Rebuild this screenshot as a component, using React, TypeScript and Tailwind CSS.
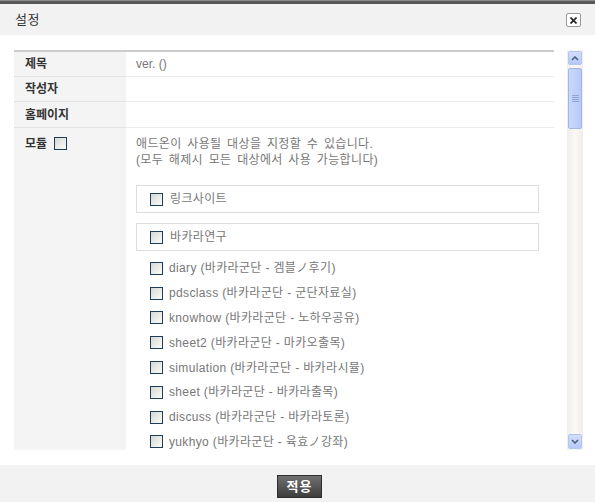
import React from 'react';

const FONT = "font-['Liberation_Sans','Noto_Sans_CJK_KR',sans-serif]";

const modules = [
  { id: 'diary', name: '바카라군단 - 겜블ノ후기' },
  { id: 'pdsclass', name: '바카라군단 - 군단자료실' },
  { id: 'knowhow', name: '바카라군단 - 노하우공유' },
  { id: 'sheet2', name: '바카라군단 - 마카오출목' },
  { id: 'simulation', name: '바카라군단 - 바카라시뮬' },
  { id: 'sheet', name: '바카라군단 - 바카라출목' },
  { id: 'discuss', name: '바카라군단 - 바카라토론' },
  { id: 'yukhyo', name: '바카라군단 - 육효ノ강좌' },
];

const Check = () => (
  <span className="inline-block w-[13px] h-[13px] shrink-0 border border-[#1c3d5c] bg-linear-to-br from-[#d8d8d2] to-[#fbfbf9]" />
);

const InfoRow = ({ label, value, h }: { label: string; value?: string; h: string }) => (
  <div className={`flex ${h}`}>
    <div className="w-[112px] shrink-0 bg-[#f4f4f4] border-b border-[#e2e2e2] pl-[11px] flex items-center text-[12px] font-bold text-[#333]">
      {label}
    </div>
    <div className="flex-1 border-b border-[#ececec] pl-[10px] flex items-center text-[12px] text-[#777]">
      {value}
    </div>
  </div>
);

const Scrollbar = () => (
  <div className="w-[16px] h-[400px] shrink-0 flex flex-col bg-linear-to-r from-[#efeee8] via-[#faf9f6] to-[#efeee8]">
    <div className="mx-[1px] mt-[1px] h-[14px] rounded-[2px] border border-[#b4c6ef] bg-linear-to-b from-[#d3defd] to-[#b6c9f7] flex items-center justify-center">
      <svg width="8" height="5" viewBox="0 0 8 5">
        <path d="M1 4 L4 1 L7 4" stroke="#4d6185" strokeWidth="1.6" fill="none" />
      </svg>
    </div>
    <div className="mx-[1px] mt-[3px] h-[61px] rounded-[2px] border border-[#a3b6e2] bg-linear-to-r from-[#c9d7fd] to-[#b7caf8] flex flex-col items-center justify-center gap-[1px]">
      <span className="w-[7px] h-[1px] bg-[#8ea4d8]" />
      <span className="w-[7px] h-[1px] bg-[#8ea4d8]" />
      <span className="w-[7px] h-[1px] bg-[#8ea4d8]" />
      <span className="w-[7px] h-[1px] bg-[#8ea4d8]" />
    </div>
    <div className="flex-1" />
    <div className="mx-[1px] mb-[1px] h-[15px] rounded-[2px] border border-[#b4c6ef] bg-linear-to-b from-[#d3defd] to-[#b6c9f7] flex items-center justify-center">
      <svg width="8" height="5" viewBox="0 0 8 5">
        <path d="M1 1 L4 4 L7 1" stroke="#4d6185" strokeWidth="1.6" fill="none" />
      </svg>
    </div>
  </div>
);

export default function App() {
  return (
    <div className={`w-[595px] h-[502px] flex flex-col bg-white overflow-hidden ${FONT}`}>
      <div className="h-[4px] bg-[#585858] border-t border-[#8c8c8c]" />
      <header className="h-[31px] bg-[#f2f2f2] flex items-center justify-between pl-[15px] pr-[14px]">
        <h1 className="text-[13px] text-[#333] tracking-[0.5px]">설정</h1>
        <button className="w-[15px] h-[14px] mt-[1px] rounded-[2px] border border-[#9a9a9a] bg-white flex items-center justify-center">
          <svg width="7" height="7" viewBox="0 0 7 7">
            <path d="M0.5 0.5 L6.5 6.5 M6.5 0.5 L0.5 6.5" stroke="#222" strokeWidth="1.6" />
          </svg>
        </button>
      </header>

      <main className="flex-1 flex pt-[15px] pb-[15px] pl-[14px] pr-[12px] gap-[13px]">
        <div className="w-[540px] h-[400px] overflow-hidden">
          <div className="border-t-2 border-[#cccccc]">
            <InfoRow label="제목" value="ver. ()" h="h-[25px]" />
            <InfoRow label="작성자" h="h-[25px]" />
            <InfoRow label="홈페이지" h="h-[26px]" />
            <div className="flex h-[322px]">
              <div className="w-[112px] shrink-0 bg-[#f4f4f4] pl-[11px] pt-[9px] flex items-start gap-[7px] text-[12px] font-bold text-[#333]">
                <span className="leading-[14px]">모듈</span>
                <Check />
              </div>
              <div className="flex-1 pl-[10px] pr-[15px] pt-[8px] text-[12px] text-[#777] tracking-[0.35px]">
                <p className="leading-[16px] [word-spacing:2px]">애드온이 사용될 대상을 지정할 수 있습니다.</p>
                <p className="leading-[16px] [word-spacing:2px]">(모두 해제시 모든 대상에서 사용 가능합니다)</p>
                <div className="mt-[17px] h-[28px] border border-[#dddddd] pl-[13px] flex items-center gap-[7px]">
                  <Check />
                  <span>링크사이트</span>
                </div>
                <div className="mt-[10px] h-[28px] border border-[#dddddd] pl-[13px] flex items-center gap-[7px]">
                  <Check />
                  <span>바카라연구</span>
                </div>
                <ul className="mt-[5px] pl-[14px]">
                  {modules.map(m => (
                    <li key={m.id} className="h-[24.8px] flex items-center gap-[6px]">
                      <Check />
                      <span>{m.id} ({m.name})</span>
                    </li>
                  ))}
                </ul>
              </div>
            </div>
          </div>
        </div>
        <Scrollbar />
      </main>

      <footer className="h-[37px] bg-[#f2f2f2] flex justify-center pt-[10px]">
        <button className="ml-[4px] w-[45px] h-[23px] border border-[#2e2e2e] bg-linear-to-b from-[#707070] to-[#3e3e3e] text-white text-[13px] font-bold leading-none tracking-[1px]">
          적용
        </button>
      </footer>
    </div>
  );
}
